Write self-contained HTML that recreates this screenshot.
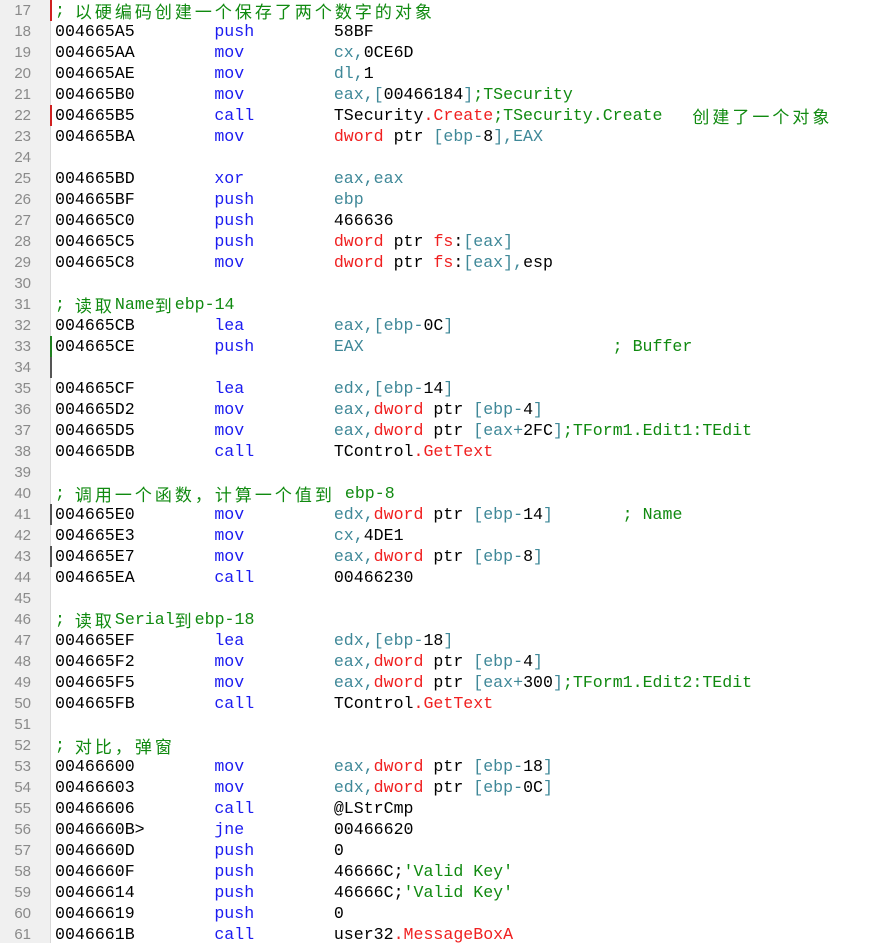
<!DOCTYPE html>
<html><head><meta charset="utf-8"><style>
html,body{margin:0;padding:0;background:#fff;width:890px;height:943px;overflow:hidden}
.g{position:absolute;left:0;top:0;width:50px;height:943px;background:#f0f0f0;border-right:1px solid #d8d8d8}
.l{position:absolute;left:0;height:21px;line-height:21px;width:890px;white-space:pre;font-family:"Liberation Mono",monospace;font-size:16.6px;color:#000;overflow:hidden}
.n{position:absolute;left:0;top:0;width:31px;text-align:right;color:#8a8a8a;font-family:"Liberation Sans",sans-serif;font-size:15px;line-height:21px}
.t{position:absolute;left:55px;top:0;line-height:21px;height:21px}
.k{color:#1c1cf0}.r{color:#3f8898}.d{color:#f02020}.c{color:#108a10}
.z{font-family:"Noto Sans CJK SC",sans-serif;font-size:17px;letter-spacing:3px;line-height:1;display:inline-block;vertical-align:top;margin-top:2px}
.mk{position:absolute;left:50px;width:2px;height:21px}
</style></head><body>
<div class="g"></div>
<div id="c"></div>
<script>
var L=[
'<span class="c">; <span class="z">以硬编码创建一个保存了两个数字的对象</span></span>',
'004665A5        <span class="k">push</span>        58BF',
'004665AA        <span class="k">mov</span>         <span class="r">cx,</span>0CE6D',
'004665AE        <span class="k">mov</span>         <span class="r">dl,</span>1',
'004665B0        <span class="k">mov</span>         <span class="r">eax,[</span>00466184<span class="r">]</span><span class="c">;TSecurity</span>',
'004665B5        <span class="k">call</span>        TSecurity<span class="d">.Create</span><span class="c">;TSecurity.Create   <span class="z">创建了一个对象</span></span>',
'004665BA        <span class="k">mov</span>         <span class="d">dword</span> ptr <span class="r">[ebp-</span>8<span class="r">],EAX</span>',
'',
'004665BD        <span class="k">xor</span>         <span class="r">eax,eax</span>',
'004665BF        <span class="k">push</span>        <span class="r">ebp</span>',
'004665C0        <span class="k">push</span>        466636',
'004665C5        <span class="k">push</span>        <span class="d">dword</span> ptr <span class="d">fs</span>:<span class="r">[eax]</span>',
'004665C8        <span class="k">mov</span>         <span class="d">dword</span> ptr <span class="d">fs</span>:<span class="r">[eax],</span>esp',
'',
'<span class="c">; <span class="z">读取</span>Name<span class="z">到</span>ebp-14</span>',
'004665CB        <span class="k">lea</span>         <span class="r">eax,[ebp-</span>0C<span class="r">]</span>',
'004665CE        <span class="k">push</span>        <span class="r">EAX</span>                         <span class="c">; Buffer</span>',
'',
'004665CF        <span class="k">lea</span>         <span class="r">edx,[ebp-</span>14<span class="r">]</span>',
'004665D2        <span class="k">mov</span>         <span class="r">eax,</span><span class="d">dword</span> ptr <span class="r">[ebp-</span>4<span class="r">]</span>',
'004665D5        <span class="k">mov</span>         <span class="r">eax,</span><span class="d">dword</span> ptr <span class="r">[eax+</span>2FC<span class="r">]</span><span class="c">;TForm1.Edit1:TEdit</span>',
'004665DB        <span class="k">call</span>        TControl<span class="d">.GetText</span>',
'',
'<span class="c">; <span class="z">调用一个函数，计算一个值到</span> ebp-8</span>',
'004665E0        <span class="k">mov</span>         <span class="r">edx,</span><span class="d">dword</span> ptr <span class="r">[ebp-</span>14<span class="r">]</span>       <span class="c">; Name</span>',
'004665E3        <span class="k">mov</span>         <span class="r">cx,</span>4DE1',
'004665E7        <span class="k">mov</span>         <span class="r">eax,</span><span class="d">dword</span> ptr <span class="r">[ebp-</span>8<span class="r">]</span>',
'004665EA        <span class="k">call</span>        00466230',
'',
'<span class="c">; <span class="z">读取</span>Serial<span class="z">到</span>ebp-18</span>',
'004665EF        <span class="k">lea</span>         <span class="r">edx,[ebp-</span>18<span class="r">]</span>',
'004665F2        <span class="k">mov</span>         <span class="r">eax,</span><span class="d">dword</span> ptr <span class="r">[ebp-</span>4<span class="r">]</span>',
'004665F5        <span class="k">mov</span>         <span class="r">eax,</span><span class="d">dword</span> ptr <span class="r">[eax+</span>300<span class="r">]</span><span class="c">;TForm1.Edit2:TEdit</span>',
'004665FB        <span class="k">call</span>        TControl<span class="d">.GetText</span>',
'',
'<span class="c">; <span class="z">对比，弹窗</span></span>',
'00466600        <span class="k">mov</span>         <span class="r">eax,</span><span class="d">dword</span> ptr <span class="r">[ebp-</span>18<span class="r">]</span>',
'00466603        <span class="k">mov</span>         <span class="r">edx,</span><span class="d">dword</span> ptr <span class="r">[ebp-</span>0C<span class="r">]</span>',
'00466606        <span class="k">call</span>        @LStrCmp',
'0046660B&gt;       <span class="k">jne</span>         00466620',
'0046660D        <span class="k">push</span>        0',
'0046660F        <span class="k">push</span>        46666C;<span class="c">\'Valid Key\'</span>',
'00466614        <span class="k">push</span>        46666C;<span class="c">\'Valid Key\'</span>',
'00466619        <span class="k">push</span>        0',
'0046661B        <span class="k">call</span>        user32<span class="d">.MessageBoxA</span>'
];
var marks={17:'#d02020',22:'#d02020',33:'#208020',34:'#555',41:'#555',43:'#555'};
var h='';
for(var i=0;i<L.length;i++){var n=17+i,y=i*21;
h+='<div class="l" style="top:'+y+'px"><span class="n">'+n+'</span><span class="t">'+L[i]+'</span></div>';
if(marks[n])h+='<div class="mk" style="top:'+y+'px;background:'+marks[n]+'"></div>';}
document.getElementById('c').innerHTML=h;
</script>
</body></html>
